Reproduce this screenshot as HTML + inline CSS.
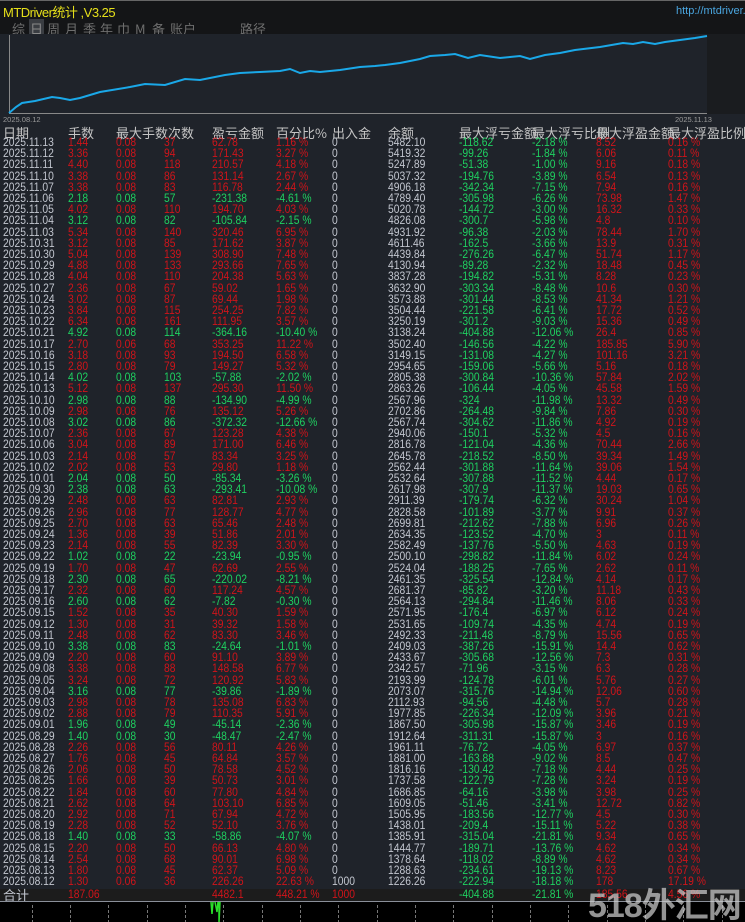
<!DOCTYPE html>
<html><head><meta charset="utf-8"><style>
*{margin:0;padding:0;box-sizing:border-box}
html{width:745px;height:922px;overflow:hidden}
body{width:745px;height:922px;background:#1f232a;position:relative;overflow:hidden;font-family:"Liberation Sans","Noto Sans CJK SC",sans-serif;}
#top{position:absolute;left:0;top:0;width:745px;height:34px;background:#141517;border-top:1px solid #666}
#title{position:absolute;left:3px;top:1px;color:#e6e01a;font:13px "Liberation Sans","Noto Sans CJK SC",sans-serif;letter-spacing:-0.5px}
#url{position:absolute;left:676px;top:4px;color:#4aa6e0;font:11px "Liberation Sans",sans-serif}
.tab{position:absolute;top:18px;color:#6e6e6e;font:13px "Noto Sans CJK SC",sans-serif}
.tab.on{background:#3a3d42;color:#8a8a8a;padding:0 1px}
#chart{position:absolute;left:0;top:34px;width:707px;height:80px;background:#1f232a}
#rightbar{position:absolute;left:707px;top:34px;width:38px;height:80px;background:#1a1c1f}
.lbl{position:absolute;font:7.5px "Liberation Sans",sans-serif;color:#9a9a9a}
#hdr{position:absolute;top:123px;left:0;width:745px;height:15px;color:#c4c4c4;font:13px "Noto Sans CJK SC",sans-serif}
#hdr span{position:absolute;white-space:nowrap;top:0}
.row{position:absolute;left:0;width:745px;height:11.2px;font-size:12px;line-height:11.2px;color:#d0141a}
.row i{position:absolute;font-style:normal;white-space:nowrap;top:0;transform:scaleX(0.86);transform-origin:0 0}
.row i:nth-child(1){left:3px;color:#c2c6cf}
.row i:nth-child(2){left:68px}
.row i:nth-child(3){left:116px}
.row i:nth-child(4){left:164px}
.row i:nth-child(5){left:212px}
.row i:nth-child(6){left:276px}
.row i:nth-child(7){left:332px;color:#c2c6cf}
.row i:nth-child(8){left:388px;color:#c2c6cf}
.row i:nth-child(9){left:459px;color:#1fd060}
.row i:nth-child(10){left:532px;color:#1fd060}
.row i:nth-child(11){left:596px;color:#d0141a}
.row i:nth-child(12){left:668px;color:#d0141a}
.row.g{color:#1fd060}
#tot{position:absolute;left:0;top:889px;width:745px;height:12px;background:#1c1c1c}
#tot .row{top:0}
#bot{position:absolute;left:0;top:901px;width:745px;height:21px;background:#000;border-top:1px solid #8a8f99}
.dl{position:absolute;top:3px;width:0;height:18px;border-left:1px dashed #777}
#wm{position:absolute;left:588px;top:878px;white-space:nowrap;font:bold 34px "Liberation Sans","Noto Sans CJK SC",sans-serif;color:rgba(210,210,210,0.7);letter-spacing:-1px}
</style></head><body>
<div id="top">
<div id="title">MTDriver统计 ,V3.25</div>
<div id="url">http://mtdriver.c</div>
<span class="tab" style="left:12px">综</span><span class="tab on" style="left:29px">日</span><span class="tab" style="left:47px">周</span><span class="tab" style="left:65px">月</span><span class="tab" style="left:83px">季</span><span class="tab" style="left:100px">年</span><span class="tab" style="left:117px">巾</span><span class="tab" style="left:135px">M</span><span class="tab" style="left:152px">备</span><span class="tab" style="left:170px">账户</span><span class="tab" style="left:240px">路径</span>
</div>
<div id="chart"></div>
<div id="rightbar"></div>
<svg style="position:absolute;left:0;top:0" width="745" height="120">
<line x1="9.5" y1="35" x2="9.5" y2="113" stroke="#888" stroke-width="1"/>
<line x1="9" y1="113.5" x2="707" y2="113.5" stroke="#888" stroke-width="1"/>
<polyline fill="none" stroke="#1aa8e8" stroke-width="2" points="9,113 16,107 22,103 35,101 52,97 60,98 70,100 80,98 100,92 130,87 145,84 165,85 185,79 200,80 225,75 240,73 260,72 280,71 290,69 300,73 310,71 320,72 340,70 360,67 375,66 385,65 400,63 420,59 430,56 445,55 455,54 468,58 480,55 500,58 510,57 520,56 530,59 545,55 560,53 575,50 600,47 623,43 633,44 643,42 655,44 665,42 680,40 695,38 707,36"/>
</svg>
<div class="lbl" style="left:3px;top:115px">2025.08.12</div>
<div class="lbl" style="left:675px;top:115px">2025.11.13</div>
<div id="hdr"><span style="left:3px">日期</span><span style="left:68px">手数</span><span style="left:116px">最大手数次数</span><span style="left:212px">盈亏金额</span><span style="left:276px">百分比%</span><span style="left:332px">出入金</span><span style="left:388px">余额</span><span style="left:459px">最大浮亏金额</span><span style="left:532px">最大浮亏比例</span><span style="left:596px">最大浮盈金额</span><span style="left:668px">最大浮盈比例</span></div>
<div id="rows" style="position:absolute;left:0;top:137px;width:745px">
<div class="row" style="top:0px"><i>2025.11.13</i><i>1.44</i><i>0.08</i><i>37</i><i>62.78</i><i>1.16 %</i><i>0</i><i>5482.10</i><i>-118.62</i><i>-2.18 %</i><i>8.52</i><i>0.16 %</i></div>
<div class="row" style="top:11.2px"><i>2025.11.12</i><i>3.36</i><i>0.08</i><i>94</i><i>171.43</i><i>3.27 %</i><i>0</i><i>5419.32</i><i>-99.26</i><i>-1.84 %</i><i>6.06</i><i>0.11 %</i></div>
<div class="row" style="top:22.4px"><i>2025.11.11</i><i>4.40</i><i>0.08</i><i>118</i><i>210.57</i><i>4.18 %</i><i>0</i><i>5247.89</i><i>-51.38</i><i>-1.00 %</i><i>9.16</i><i>0.18 %</i></div>
<div class="row" style="top:33.6px"><i>2025.11.10</i><i>3.38</i><i>0.08</i><i>86</i><i>131.14</i><i>2.67 %</i><i>0</i><i>5037.32</i><i>-194.76</i><i>-3.89 %</i><i>6.54</i><i>0.13 %</i></div>
<div class="row" style="top:44.8px"><i>2025.11.07</i><i>3.38</i><i>0.08</i><i>83</i><i>116.78</i><i>2.44 %</i><i>0</i><i>4906.18</i><i>-342.34</i><i>-7.15 %</i><i>7.94</i><i>0.16 %</i></div>
<div class="row g" style="top:56px"><i>2025.11.06</i><i>2.18</i><i>0.08</i><i>57</i><i>-231.38</i><i>-4.61 %</i><i>0</i><i>4789.40</i><i>-305.98</i><i>-6.26 %</i><i>73.98</i><i>1.47 %</i></div>
<div class="row" style="top:67.2px"><i>2025.11.05</i><i>4.02</i><i>0.08</i><i>110</i><i>194.70</i><i>4.03 %</i><i>0</i><i>5020.78</i><i>-144.72</i><i>-3.00 %</i><i>16.32</i><i>0.33 %</i></div>
<div class="row g" style="top:78.4px"><i>2025.11.04</i><i>3.12</i><i>0.08</i><i>82</i><i>-105.84</i><i>-2.15 %</i><i>0</i><i>4826.08</i><i>-300.7</i><i>-5.98 %</i><i>4.8</i><i>0.10 %</i></div>
<div class="row" style="top:89.6px"><i>2025.11.03</i><i>5.34</i><i>0.08</i><i>140</i><i>320.46</i><i>6.95 %</i><i>0</i><i>4931.92</i><i>-96.38</i><i>-2.03 %</i><i>78.44</i><i>1.70 %</i></div>
<div class="row" style="top:100.8px"><i>2025.10.31</i><i>3.12</i><i>0.08</i><i>85</i><i>171.62</i><i>3.87 %</i><i>0</i><i>4611.46</i><i>-162.5</i><i>-3.66 %</i><i>13.9</i><i>0.31 %</i></div>
<div class="row" style="top:112px"><i>2025.10.30</i><i>5.04</i><i>0.08</i><i>139</i><i>308.90</i><i>7.48 %</i><i>0</i><i>4439.84</i><i>-276.26</i><i>-6.47 %</i><i>51.74</i><i>1.17 %</i></div>
<div class="row" style="top:123.2px"><i>2025.10.29</i><i>4.88</i><i>0.08</i><i>133</i><i>293.66</i><i>7.65 %</i><i>0</i><i>4130.94</i><i>-89.28</i><i>-2.32 %</i><i>18.48</i><i>0.45 %</i></div>
<div class="row" style="top:134.4px"><i>2025.10.28</i><i>4.04</i><i>0.08</i><i>110</i><i>204.38</i><i>5.63 %</i><i>0</i><i>3837.28</i><i>-194.82</i><i>-5.31 %</i><i>8.28</i><i>0.23 %</i></div>
<div class="row" style="top:145.6px"><i>2025.10.27</i><i>2.36</i><i>0.08</i><i>67</i><i>59.02</i><i>1.65 %</i><i>0</i><i>3632.90</i><i>-303.34</i><i>-8.48 %</i><i>10.6</i><i>0.30 %</i></div>
<div class="row" style="top:156.8px"><i>2025.10.24</i><i>3.02</i><i>0.08</i><i>87</i><i>69.44</i><i>1.98 %</i><i>0</i><i>3573.88</i><i>-301.44</i><i>-8.53 %</i><i>41.34</i><i>1.21 %</i></div>
<div class="row" style="top:168px"><i>2025.10.23</i><i>3.84</i><i>0.08</i><i>115</i><i>254.25</i><i>7.82 %</i><i>0</i><i>3504.44</i><i>-221.58</i><i>-6.41 %</i><i>17.72</i><i>0.52 %</i></div>
<div class="row" style="top:179.2px"><i>2025.10.22</i><i>6.34</i><i>0.08</i><i>161</i><i>111.95</i><i>3.57 %</i><i>0</i><i>3250.19</i><i>-301.2</i><i>-9.03 %</i><i>15.36</i><i>0.49 %</i></div>
<div class="row g" style="top:190.4px"><i>2025.10.21</i><i>4.92</i><i>0.08</i><i>114</i><i>-364.16</i><i>-10.40 %</i><i>0</i><i>3138.24</i><i>-404.88</i><i>-12.06 %</i><i>26.4</i><i>0.85 %</i></div>
<div class="row" style="top:201.6px"><i>2025.10.17</i><i>2.70</i><i>0.06</i><i>68</i><i>353.25</i><i>11.22 %</i><i>0</i><i>3502.40</i><i>-146.56</i><i>-4.22 %</i><i>185.85</i><i>5.90 %</i></div>
<div class="row" style="top:212.8px"><i>2025.10.16</i><i>3.18</i><i>0.08</i><i>93</i><i>194.50</i><i>6.58 %</i><i>0</i><i>3149.15</i><i>-131.08</i><i>-4.27 %</i><i>101.16</i><i>3.21 %</i></div>
<div class="row" style="top:224px"><i>2025.10.15</i><i>2.80</i><i>0.08</i><i>79</i><i>149.27</i><i>5.32 %</i><i>0</i><i>2954.65</i><i>-159.06</i><i>-5.66 %</i><i>5.16</i><i>0.18 %</i></div>
<div class="row g" style="top:235.2px"><i>2025.10.14</i><i>4.02</i><i>0.08</i><i>103</i><i>-57.88</i><i>-2.02 %</i><i>0</i><i>2805.38</i><i>-300.84</i><i>-10.36 %</i><i>57.84</i><i>2.02 %</i></div>
<div class="row" style="top:246.4px"><i>2025.10.13</i><i>5.12</i><i>0.08</i><i>137</i><i>295.30</i><i>11.50 %</i><i>0</i><i>2863.26</i><i>-106.44</i><i>-4.05 %</i><i>45.58</i><i>1.59 %</i></div>
<div class="row g" style="top:257.6px"><i>2025.10.10</i><i>2.98</i><i>0.08</i><i>88</i><i>-134.90</i><i>-4.99 %</i><i>0</i><i>2567.96</i><i>-324</i><i>-11.98 %</i><i>13.32</i><i>0.49 %</i></div>
<div class="row" style="top:268.8px"><i>2025.10.09</i><i>2.98</i><i>0.08</i><i>76</i><i>135.12</i><i>5.26 %</i><i>0</i><i>2702.86</i><i>-264.48</i><i>-9.84 %</i><i>7.86</i><i>0.30 %</i></div>
<div class="row g" style="top:280px"><i>2025.10.08</i><i>3.02</i><i>0.08</i><i>86</i><i>-372.32</i><i>-12.66 %</i><i>0</i><i>2567.74</i><i>-304.62</i><i>-11.86 %</i><i>4.92</i><i>0.19 %</i></div>
<div class="row" style="top:291.2px"><i>2025.10.07</i><i>2.36</i><i>0.08</i><i>67</i><i>123.28</i><i>4.38 %</i><i>0</i><i>2940.06</i><i>-150.1</i><i>-5.32 %</i><i>4.5</i><i>0.16 %</i></div>
<div class="row" style="top:302.4px"><i>2025.10.06</i><i>3.04</i><i>0.08</i><i>89</i><i>171.00</i><i>6.46 %</i><i>0</i><i>2816.78</i><i>-121.04</i><i>-4.36 %</i><i>70.44</i><i>2.66 %</i></div>
<div class="row" style="top:313.6px"><i>2025.10.03</i><i>2.14</i><i>0.08</i><i>57</i><i>83.34</i><i>3.25 %</i><i>0</i><i>2645.78</i><i>-218.52</i><i>-8.50 %</i><i>39.34</i><i>1.49 %</i></div>
<div class="row" style="top:324.8px"><i>2025.10.02</i><i>2.02</i><i>0.08</i><i>53</i><i>29.80</i><i>1.18 %</i><i>0</i><i>2562.44</i><i>-301.88</i><i>-11.64 %</i><i>39.06</i><i>1.54 %</i></div>
<div class="row g" style="top:336px"><i>2025.10.01</i><i>2.04</i><i>0.08</i><i>50</i><i>-85.34</i><i>-3.26 %</i><i>0</i><i>2532.64</i><i>-307.88</i><i>-11.52 %</i><i>4.44</i><i>0.17 %</i></div>
<div class="row g" style="top:347.2px"><i>2025.09.30</i><i>2.38</i><i>0.08</i><i>63</i><i>-293.41</i><i>-10.08 %</i><i>0</i><i>2617.98</i><i>-307.9</i><i>-11.37 %</i><i>19.03</i><i>0.65 %</i></div>
<div class="row" style="top:358.4px"><i>2025.09.29</i><i>2.48</i><i>0.08</i><i>63</i><i>82.81</i><i>2.93 %</i><i>0</i><i>2911.39</i><i>-179.74</i><i>-6.32 %</i><i>30.24</i><i>1.04 %</i></div>
<div class="row" style="top:369.6px"><i>2025.09.26</i><i>2.96</i><i>0.08</i><i>77</i><i>128.77</i><i>4.77 %</i><i>0</i><i>2828.58</i><i>-101.89</i><i>-3.77 %</i><i>9.91</i><i>0.37 %</i></div>
<div class="row" style="top:380.8px"><i>2025.09.25</i><i>2.70</i><i>0.08</i><i>63</i><i>65.46</i><i>2.48 %</i><i>0</i><i>2699.81</i><i>-212.62</i><i>-7.88 %</i><i>6.96</i><i>0.26 %</i></div>
<div class="row" style="top:392px"><i>2025.09.24</i><i>1.36</i><i>0.08</i><i>39</i><i>51.86</i><i>2.01 %</i><i>0</i><i>2634.35</i><i>-123.52</i><i>-4.70 %</i><i>3</i><i>0.11 %</i></div>
<div class="row" style="top:403.2px"><i>2025.09.23</i><i>2.14</i><i>0.08</i><i>55</i><i>82.39</i><i>3.30 %</i><i>0</i><i>2582.49</i><i>-137.76</i><i>-5.50 %</i><i>4.63</i><i>0.19 %</i></div>
<div class="row g" style="top:414.4px"><i>2025.09.22</i><i>1.02</i><i>0.08</i><i>22</i><i>-23.94</i><i>-0.95 %</i><i>0</i><i>2500.10</i><i>-298.82</i><i>-11.84 %</i><i>6.02</i><i>0.24 %</i></div>
<div class="row" style="top:425.6px"><i>2025.09.19</i><i>1.70</i><i>0.08</i><i>47</i><i>62.69</i><i>2.55 %</i><i>0</i><i>2524.04</i><i>-188.25</i><i>-7.65 %</i><i>2.62</i><i>0.11 %</i></div>
<div class="row g" style="top:436.8px"><i>2025.09.18</i><i>2.30</i><i>0.08</i><i>65</i><i>-220.02</i><i>-8.21 %</i><i>0</i><i>2461.35</i><i>-325.54</i><i>-12.84 %</i><i>4.14</i><i>0.17 %</i></div>
<div class="row" style="top:448px"><i>2025.09.17</i><i>2.32</i><i>0.08</i><i>60</i><i>117.24</i><i>4.57 %</i><i>0</i><i>2681.37</i><i>-85.82</i><i>-3.20 %</i><i>11.18</i><i>0.43 %</i></div>
<div class="row g" style="top:459.2px"><i>2025.09.16</i><i>2.60</i><i>0.08</i><i>62</i><i>-7.82</i><i>-0.30 %</i><i>0</i><i>2564.13</i><i>-294.84</i><i>-11.46 %</i><i>8.06</i><i>0.33 %</i></div>
<div class="row" style="top:470.4px"><i>2025.09.15</i><i>1.52</i><i>0.08</i><i>35</i><i>40.30</i><i>1.59 %</i><i>0</i><i>2571.95</i><i>-176.4</i><i>-6.97 %</i><i>6.12</i><i>0.24 %</i></div>
<div class="row" style="top:481.6px"><i>2025.09.12</i><i>1.30</i><i>0.08</i><i>31</i><i>39.32</i><i>1.58 %</i><i>0</i><i>2531.65</i><i>-109.74</i><i>-4.35 %</i><i>4.74</i><i>0.19 %</i></div>
<div class="row" style="top:492.8px"><i>2025.09.11</i><i>2.48</i><i>0.08</i><i>62</i><i>83.30</i><i>3.46 %</i><i>0</i><i>2492.33</i><i>-211.48</i><i>-8.79 %</i><i>15.56</i><i>0.65 %</i></div>
<div class="row g" style="top:504px"><i>2025.09.10</i><i>3.38</i><i>0.08</i><i>83</i><i>-24.64</i><i>-1.01 %</i><i>0</i><i>2409.03</i><i>-387.26</i><i>-15.91 %</i><i>14.4</i><i>0.62 %</i></div>
<div class="row" style="top:515.2px"><i>2025.09.09</i><i>2.20</i><i>0.08</i><i>60</i><i>91.10</i><i>3.89 %</i><i>0</i><i>2433.67</i><i>-305.68</i><i>-12.56 %</i><i>7.3</i><i>0.31 %</i></div>
<div class="row" style="top:526.4px"><i>2025.09.08</i><i>3.38</i><i>0.08</i><i>88</i><i>148.58</i><i>6.77 %</i><i>0</i><i>2342.57</i><i>-71.96</i><i>-3.15 %</i><i>6.3</i><i>0.28 %</i></div>
<div class="row" style="top:537.6px"><i>2025.09.05</i><i>3.24</i><i>0.08</i><i>72</i><i>120.92</i><i>5.83 %</i><i>0</i><i>2193.99</i><i>-124.78</i><i>-6.01 %</i><i>5.76</i><i>0.27 %</i></div>
<div class="row g" style="top:548.8px"><i>2025.09.04</i><i>3.16</i><i>0.08</i><i>77</i><i>-39.86</i><i>-1.89 %</i><i>0</i><i>2073.07</i><i>-315.76</i><i>-14.94 %</i><i>12.06</i><i>0.60 %</i></div>
<div class="row" style="top:560px"><i>2025.09.03</i><i>2.98</i><i>0.08</i><i>78</i><i>135.08</i><i>6.83 %</i><i>0</i><i>2112.93</i><i>-94.56</i><i>-4.48 %</i><i>5.7</i><i>0.28 %</i></div>
<div class="row" style="top:571.2px"><i>2025.09.02</i><i>2.88</i><i>0.08</i><i>79</i><i>110.35</i><i>5.91 %</i><i>0</i><i>1977.85</i><i>-226.34</i><i>-12.09 %</i><i>3.96</i><i>0.21 %</i></div>
<div class="row g" style="top:582.4px"><i>2025.09.01</i><i>1.96</i><i>0.08</i><i>49</i><i>-45.14</i><i>-2.36 %</i><i>0</i><i>1867.50</i><i>-305.98</i><i>-15.87 %</i><i>3.46</i><i>0.19 %</i></div>
<div class="row g" style="top:593.6px"><i>2025.08.29</i><i>1.40</i><i>0.08</i><i>30</i><i>-48.47</i><i>-2.47 %</i><i>0</i><i>1912.64</i><i>-311.31</i><i>-15.87 %</i><i>3</i><i>0.16 %</i></div>
<div class="row" style="top:604.8px"><i>2025.08.28</i><i>2.26</i><i>0.08</i><i>56</i><i>80.11</i><i>4.26 %</i><i>0</i><i>1961.11</i><i>-76.72</i><i>-4.05 %</i><i>6.97</i><i>0.37 %</i></div>
<div class="row" style="top:616px"><i>2025.08.27</i><i>1.76</i><i>0.08</i><i>45</i><i>64.84</i><i>3.57 %</i><i>0</i><i>1881.00</i><i>-163.88</i><i>-9.02 %</i><i>8.5</i><i>0.47 %</i></div>
<div class="row" style="top:627.2px"><i>2025.08.26</i><i>2.06</i><i>0.08</i><i>50</i><i>78.58</i><i>4.52 %</i><i>0</i><i>1816.16</i><i>-130.42</i><i>-7.18 %</i><i>4.44</i><i>0.25 %</i></div>
<div class="row" style="top:638.4px"><i>2025.08.25</i><i>1.66</i><i>0.08</i><i>39</i><i>50.73</i><i>3.01 %</i><i>0</i><i>1737.58</i><i>-122.79</i><i>-7.28 %</i><i>3.24</i><i>0.19 %</i></div>
<div class="row" style="top:649.6px"><i>2025.08.22</i><i>1.84</i><i>0.08</i><i>60</i><i>77.80</i><i>4.84 %</i><i>0</i><i>1686.85</i><i>-64.16</i><i>-3.98 %</i><i>3.98</i><i>0.25 %</i></div>
<div class="row" style="top:660.8px"><i>2025.08.21</i><i>2.62</i><i>0.08</i><i>64</i><i>103.10</i><i>6.85 %</i><i>0</i><i>1609.05</i><i>-51.46</i><i>-3.41 %</i><i>12.72</i><i>0.82 %</i></div>
<div class="row" style="top:672px"><i>2025.08.20</i><i>2.92</i><i>0.08</i><i>71</i><i>67.94</i><i>4.72 %</i><i>0</i><i>1505.95</i><i>-183.56</i><i>-12.77 %</i><i>4.5</i><i>0.30 %</i></div>
<div class="row" style="top:683.2px"><i>2025.08.19</i><i>2.28</i><i>0.08</i><i>52</i><i>52.10</i><i>3.76 %</i><i>0</i><i>1438.01</i><i>-209.4</i><i>-15.11 %</i><i>5.22</i><i>0.38 %</i></div>
<div class="row g" style="top:694.4px"><i>2025.08.18</i><i>1.40</i><i>0.08</i><i>33</i><i>-58.86</i><i>-4.07 %</i><i>0</i><i>1385.91</i><i>-315.04</i><i>-21.81 %</i><i>9.34</i><i>0.65 %</i></div>
<div class="row" style="top:705.6px"><i>2025.08.15</i><i>2.20</i><i>0.08</i><i>50</i><i>66.13</i><i>4.80 %</i><i>0</i><i>1444.77</i><i>-189.71</i><i>-13.76 %</i><i>4.62</i><i>0.34 %</i></div>
<div class="row" style="top:716.8px"><i>2025.08.14</i><i>2.54</i><i>0.08</i><i>68</i><i>90.01</i><i>6.98 %</i><i>0</i><i>1378.64</i><i>-118.02</i><i>-8.89 %</i><i>4.62</i><i>0.34 %</i></div>
<div class="row" style="top:728px"><i>2025.08.13</i><i>1.80</i><i>0.08</i><i>45</i><i>62.37</i><i>5.09 %</i><i>0</i><i>1288.63</i><i>-234.61</i><i>-19.13 %</i><i>8.23</i><i>0.67 %</i></div>
<div class="row" style="top:739.2px"><i>2025.08.12</i><i>1.30</i><i>0.06</i><i>36</i><i>226.26</i><i>22.63 %</i><i>1000</i><i>1226.26</i><i>-222.94</i><i>-18.18 %</i><i>178</i><i>17.19 %</i></div>
</div>
<div id="tot"><div class="row" style="top:0"><i style="font:13px 'Noto Sans CJK SC',sans-serif;line-height:12px;color:#c2c6cf;transform:none">合计</i><i>187.06</i><i></i><i></i><i>4482.1</i><i>448.21 %</i><i style="color:#d0141a">1000</i><i></i><i>-404.88</i><i>-21.81 %</i><i>185.56</i><i>4.56 %</i></div></div>
<div id="bot">
<div class="dl" style="left:32px"></div><div class="dl" style="left:70px"></div><div class="dl" style="left:108px"></div><div class="dl" style="left:147px"></div><div class="dl" style="left:185px"></div><div class="dl" style="left:223px"></div><div class="dl" style="left:262px"></div><div class="dl" style="left:300px"></div><div class="dl" style="left:338px"></div><div class="dl" style="left:377px"></div><div class="dl" style="left:415px"></div><div class="dl" style="left:453px"></div><div class="dl" style="left:492px"></div><div class="dl" style="left:530px"></div><div class="dl" style="left:568px"></div><div class="dl" style="left:607px"></div><div class="dl" style="left:645px"></div><div class="dl" style="left:683px"></div><div class="dl" style="left:722px"></div>
<svg style="position:absolute;left:205px;top:0" width="20" height="21"><path d="M6 0 L7 12 L8 0 M10 0 L12 10 L13 0 M14 0 L14 21 L15 0" stroke="#2be02b" stroke-width="1.5" fill="none"/></svg>
</div>
<div id="wm">518外汇网</div>
</body></html>
